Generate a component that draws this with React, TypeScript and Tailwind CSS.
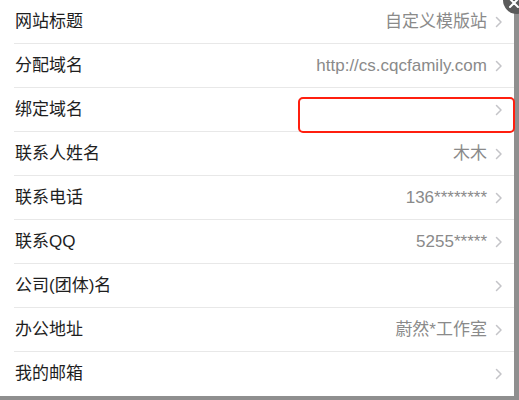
import React from "react";

const rows: { label: string; value: string }[] = [
  { label: "网站标题", value: "自定义模版站" },
  { label: "分配域名", value: "http://cs.cqcfamily.com" },
  { label: "绑定域名", value: "" },
  { label: "联系人姓名", value: "木木" },
  { label: "联系电话", value: "136********" },
  { label: "联系QQ", value: "5255*****" },
  { label: "公司(团体)名", value: "" },
  { label: "办公地址", value: "蔚然*工作室" },
  { label: "我的邮箱", value: "" },
];

function Chevron() {
  return (
    <svg width="8" height="12" viewBox="0 0 8 12" className="shrink-0">
      <polyline points="1.5,1.5 6,6 1.5,10.5" fill="none" stroke="#c4c4c8" strokeWidth="1.5" strokeLinecap="round" strokeLinejoin="round" />
    </svg>
  );
}

export default function App() {
  return (
    <div
      className="relative w-[519px] h-[400px] overflow-hidden bg-[#8f8f8f]"
      style={{ fontFamily: '"Liberation Sans", "Noto Sans CJK SC", sans-serif' }}
    >
      <div className="w-[514px] h-[396px] bg-white flex flex-col">
        {rows.map((r, i) => (
          <div key={i} className="h-[44px] pl-[14px] shrink-0">
            <div
              className={`h-full flex items-center pr-[11px] ${i < rows.length - 1 ? "border-b border-[#e8e8e8]" : ""}`}
            >
              <span className="text-[17px] text-[#1e1e1e] pl-px flex-1">{r.label}</span>
              <span className="text-[17px] text-[#8a8a8a] mr-[8px]">{r.value}</span>
              <Chevron />
            </div>
          </div>
        ))}
      </div>
      <div className="absolute left-[298px] top-[97px] w-[217px] h-[36px] border-2 border-[#ff1f0f] rounded-[5px]" />
      <div className="absolute left-[503px] top-[-14px] w-[28px] h-[28px] rounded-full bg-[#5a5a5a] flex items-center justify-center">
        <svg width="12" height="12" viewBox="0 0 12 12" className="mt-[6px] mr-[6px]">
          <path d="M2 2 L10 10 M10 2 L2 10" stroke="#fff" strokeWidth="2" strokeLinecap="round" />
        </svg>
      </div>
    </div>
  );
}
